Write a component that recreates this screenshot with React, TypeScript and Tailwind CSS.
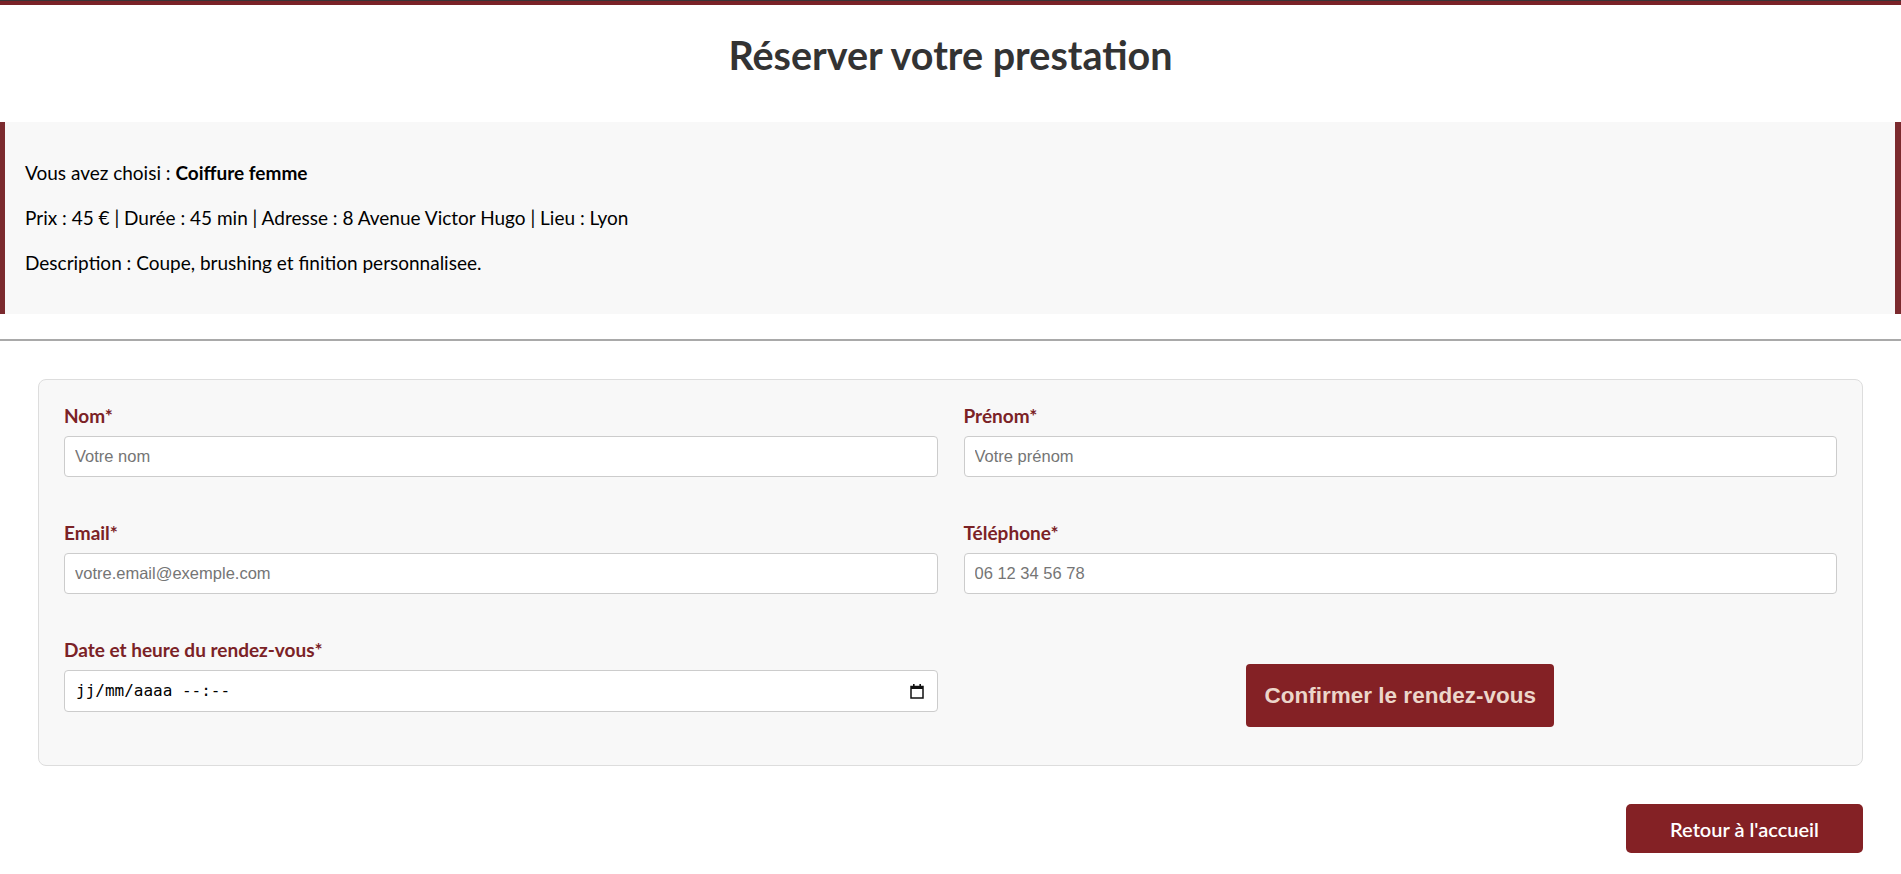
import { useState } from "react"

type Prestation = {
  nom: string
  prix: number
  duree: number
  adresse: string
  lieu: string
  description: string
}

const prestation: Prestation = {
  nom: "Coiffure femme",
  prix: 45,
  duree: 45,
  adresse: "8 Avenue Victor Hugo",
  lieu: "Lyon",
  description: "Coupe, brushing et finition personnalisee.",
}

const titleFont = "font-['Lato','Noto_Sans',sans-serif]"

function CalendarIcon() {
  return (
    <svg width="14" height="16" viewBox="0 0 14 16" aria-hidden="true">
      <rect x="1" y="3.5" width="12" height="11.5" fill="none" stroke="#111" strokeWidth="1.5" />
      <rect x="1" y="3" width="12" height="3" fill="#111" />
      <rect x="3" y="1" width="1.6" height="3" fill="#111" />
      <rect x="9.4" y="1" width="1.6" height="3" fill="#111" />
    </svg>
  )
}

function Field({
  label,
  placeholder,
  type = "text",
}: {
  label: string
  placeholder: string
  type?: string
}) {
  const [value, setValue] = useState("")
  return (
    <div className="min-w-0">
      <label className="mb-[9px] block text-[19px] font-bold leading-[23px] text-[#7b2226]">
        {label}
      </label>
      <input
        type={type}
        value={value}
        onChange={(e) => setValue(e.target.value)}
        placeholder={placeholder}
        className="block h-[41px] w-full rounded-[4px] border border-[#cccccc] bg-white px-[10px] font-['Liberation_Sans',Arial,sans-serif] text-[16.5px] text-[#222] outline-none placeholder:text-[#757575]"
      />
    </div>
  )
}

export default function App() {
  return (
    <div className={`min-h-screen bg-white ${titleFont} text-[#111]`}>
      <div className="h-[5px] border-t border-[#3a3436] bg-[#7a2328]" />

      <h1 className="pt-[26px] pb-[43px] text-center text-[39.5px] font-bold leading-[48px] text-[#333333]">
        Réserver votre prestation
      </h1>

      <section className="border-l-[5px] border-r-[6px] border-[#7b2a2e] bg-[#f8f8f8] px-[20px] pt-[19px] pb-[20px] text-[19px] leading-[27px] text-black">
        <p className="my-[18px]">
          Vous avez choisi : <strong className="font-bold">{prestation.nom}</strong>
        </p>
        <p className="my-[18px]">
          Prix : {prestation.prix} € | Durée : {prestation.duree} min | Adresse :{" "}
          {prestation.adresse} | Lieu : {prestation.lieu}
        </p>
        <p className="my-[18px]">Description : {prestation.description}</p>
      </section>

      <div className="mt-[25px] border-t-2 border-[#a9a9a9]" />

      <form
        onSubmit={(e) => e.preventDefault()}
        className="mx-[38px] mt-[38px] rounded-[8px] border border-[#dddddd] bg-[#f8f8f8] px-[25px] pt-[24px] pb-[38px]"
      >
        <div className="grid grid-cols-2 gap-x-[26px] gap-y-[44px]">
          <Field label="Nom*" placeholder="Votre nom" />
          <Field label="Prénom*" placeholder="Votre prénom" />
          <Field label="Email*" placeholder="votre.email@exemple.com" type="email" />
          <Field label="Téléphone*" placeholder="06 12 34 56 78" type="tel" />

          <div className="min-w-0">
            <label className="mb-[9px] block text-[19px] font-bold leading-[23px] text-[#7b2226]">
              Date et heure du rendez-vous*
            </label>
            <div className="flex h-[42px] w-full items-center justify-between rounded-[4px] border border-[#cccccc] bg-white pl-[11px] pr-[13px]">
              <span className="font-['DejaVu_Sans_Mono',monospace] text-[16px] text-black">
                jj/mm/aaaa --:--
              </span>
              <CalendarIcon />
            </div>
          </div>

          <div className="flex items-start justify-center pt-[26px]">
            <button
              type="submit"
              className="h-[63px] w-[308px] rounded-[4px] bg-[#842125] font-['Liberation_Sans',Arial,sans-serif] text-[22.5px] font-bold text-[#ecd6ca]"
            >
              Confirmer le rendez-vous
            </button>
          </div>
        </div>
      </form>

      <div className="flex justify-end px-[38px] pt-[38px] pb-[22px]">
        <button
          type="button"
          className="h-[49px] w-[237px] rounded-[5px] bg-[#842125] text-[20px] font-semibold text-white"
        >
          Retour à l'accueil
        </button>
      </div>
    </div>
  )
}
